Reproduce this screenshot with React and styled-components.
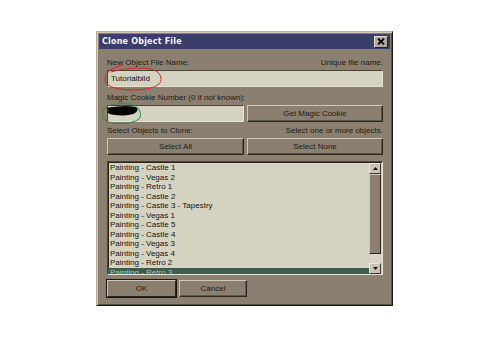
import React from 'react'
import styled, { createGlobalStyle } from 'styled-components'

const Global = createGlobalStyle`
  html, body { margin: 0; background: #fff; }
  body { font-family: "Liberation Sans", Arial, sans-serif; }
`

const Window = styled.div`
  position: relative;
  box-sizing: border-box;
  width: 297px;
  height: 275px;
  margin: 31px 0 0 96px;
  background: #8b8070;
  border-top: 1px solid #b8ad9c;
  border-left: 1px solid #b8ad9c;
  border-right: 1px solid #1a1612;
  border-bottom: 1px solid #1a1612;
  box-shadow: inset 1px 1px 0 #d2c8b8, inset -1px -1px 0 #5a5246;
  display: flex;
  flex-direction: column;
`

const TitleBar = styled.div`
  height: 15px;
  margin: 2px 2px 0 2px;
  background: #3b3d6b;
  display: flex;
  align-items: center;
  justify-content: space-between;
  padding: 0 2px 0 3px;
`

const Title = styled.span`
  color: #f4f4f8;
  font-family: "DejaVu Sans", Verdana, sans-serif;
  font-weight: bold;
  font-size: 8px;
  letter-spacing: 0.2px;
`

const CloseBox = styled.div`
  width: 14px;
  height: 12px;
  box-sizing: border-box;
  background: #b3aa9c;
  border-top: 1px solid #e0d8cc;
  border-left: 1px solid #e0d8cc;
  border-right: 1px solid #222;
  border-bottom: 1px solid #222;
  display: flex;
  align-items: center;
  justify-content: center;
`

const Body = styled.div`
  padding: 8px 9px 0 10px;
  display: flex;
  flex-direction: column;
`

const LabelRow = styled.div`
  display: flex;
  justify-content: space-between;
  height: 12px;
  line-height: 12px;
  font-size: 8px;
  color: #1c1a16;
  margin-top: ${p => p.$mt || 0}px;
  margin-bottom: 1px;
`

const Field = styled.div`
  box-sizing: border-box;
  height: 17px;
  background: #d4d2c1;
  border-top: 1px solid #4a4338;
  border-left: 1px solid #4a4338;
  border-right: 1px solid #e6e2d4;
  border-bottom: 1px solid #e6e2d4;
  font-size: 8px;
  color: #111;
  padding-left: 3px;
  display: flex;
  align-items: center;
`

const Pair = styled.div`
  display: grid;
  grid-template-columns: 137px 136px;
  column-gap: 3px;
`

const Button = styled.div`
  box-sizing: border-box;
  height: 17px;
  width: ${p => p.$w || 'auto'};
  background: #8b8070;
  border-top: 1px solid #cfc6b6;
  border-left: 1px solid #cfc6b6;
  border-right: 1px solid #2a251f;
  border-bottom: 1px solid #2a251f;
  box-shadow: ${p => (p.$default ? '0 0 0 1px #1a1612' : 'inset -1px -1px 0 #5e564a')};
  font-size: 8px;
  color: #1e1b17;
  display: flex;
  align-items: center;
  justify-content: center;
`

const ListBox = styled.div`
  box-sizing: border-box;
  height: 114px;
  margin-top: 6px;
  background: #d4d2c1;
  border-top: 1px solid #4a4338;
  border-left: 1px solid #4a4338;
  border-right: 1px solid #e6e2d4;
  border-bottom: 1px solid #e6e2d4;
  box-shadow: inset 1px 1px 0 #2a251f;
  display: flex;
  overflow: hidden;
`

const Items = styled.div`
  flex: 1;
  padding-top: 1px;
  overflow: hidden;
`

const Item = styled.div`
  height: 9.5px;
  line-height: 9.5px;
  font-size: 8px;
  padding-left: 2px;
  color: ${p => (p.$sel ? '#a9c9b6' : '#141412')};
  background: ${p => (p.$sel ? '#3e5c4b' : 'transparent')};
  white-space: nowrap;
`

const ScrollBar = styled.div`
  width: 12px;
  margin: 1px 1px 0 0;
  display: flex;
  flex-direction: column;
`

const Arrow = styled.div`
  box-sizing: border-box;
  height: 11px;
  background: #c9c3b3;
  border-top: 1px solid #ece8dc;
  border-left: 1px solid #ece8dc;
  border-right: 1px solid #3a342c;
  border-bottom: 1px solid #3a342c;
  display: flex;
  align-items: center;
  justify-content: center;
`

const Thumb = styled.div`
  box-sizing: border-box;
  height: 80px;
  background: #8b8070;
  border-top: 1px solid #cfc6b6;
  border-left: 1px solid #cfc6b6;
  border-right: 1px solid #2a251f;
  border-bottom: 1px solid #2a251f;
`

const Track = styled.div`
  flex: 0 0 9px;
  background: #d8d4c6;
`

const Footer = styled.div`
  display: flex;
  gap: 3px;
  margin-top: 5px;
`

const Marks = styled.svg`
  position: absolute;
  left: 0;
  top: 0;
  pointer-events: none;
`

const items = [
  'Painting - Castle 1',
  'Painting - Vegas 2',
  'Painting - Retro 1',
  'Painting - Castle 2',
  'Painting - Castle 3 - Tapestry',
  'Painting - Vegas 1',
  'Painting - Castle 5',
  'Painting - Castle 4',
  'Painting - Vegas 3',
  'Painting - Vegas 4',
  'Painting - Retro 2',
  'Painting - Retro 3',
]

export default function App() {
  return (
    <>
      <Global />
      <Window>
        <TitleBar>
          <Title>Clone Object File</Title>
          <CloseBox>
            <svg width="8" height="7" viewBox="0 0 8 7">
              <path d="M1 0.5 L7 6.5 M7 0.5 L1 6.5" stroke="#000" strokeWidth="1.8" />
            </svg>
          </CloseBox>
        </TitleBar>
        <Body>
          <LabelRow>
            <span>New Object File Name:</span>
            <span>Unique file name.</span>
          </LabelRow>
          <Field>Tutorialbild</Field>
          <LabelRow $mt={5}>
            <span>Magic Cookie Number (0 if not known):</span>
          </LabelRow>
          <Pair>
            <Field />
            <Button>Get Magic Cookie</Button>
          </Pair>
          <LabelRow $mt={3}>
            <span>Select Objects to Clone:</span>
            <span>Select one or more objects.</span>
          </LabelRow>
          <Pair>
            <Button>Select All</Button>
            <Button>Select None</Button>
          </Pair>
          <ListBox>
            <Items>
              {items.map((t, i) => (
                <Item key={t} $sel={i === items.length - 1}>{t}</Item>
              ))}
            </Items>
            <ScrollBar>
              <Arrow>
                <svg width="5" height="3" viewBox="0 0 5 3"><path d="M0 3 L2.5 0 L5 3 Z" fill="#111" /></svg>
              </Arrow>
              <Thumb />
              <Track />
              <Arrow>
                <svg width="5" height="3" viewBox="0 0 5 3"><path d="M0 0 L2.5 3 L5 0 Z" fill="#111" /></svg>
              </Arrow>
            </ScrollBar>
          </ListBox>
          <Footer>
            <Button $w="69px" $default>OK</Button>
            <Button $w="68px">Cancel</Button>
          </Footer>
        </Body>
        <Marks width="297" height="275" viewBox="0 0 297 275">
          <path d="M26 33 C16 35 8 40 8 48 C9 55 20 58 40 58 C56 57 65 53 64 46 C63 39 55 36 44 36 C36 36 24 37 14 40"
            fill="none" stroke="#d8262a" strokeWidth="1" />
          <path d="M12 77 C24 75 36 75 39 77 C39 80 36 81 26 82 C20 82 14 82 12 80"
            fill="#050505" stroke="#050505" strokeWidth="3" strokeLinecap="round" />
          <path d="M14 73 C6 74 3 82 8 88 C14 93 34 93 42 87 C46 82 42 73 32 72 C25 71 18 72 14 73"
            fill="none" stroke="#2d8a4a" strokeWidth="1" />
        </Marks>
      </Window>
    </>
  )
}
